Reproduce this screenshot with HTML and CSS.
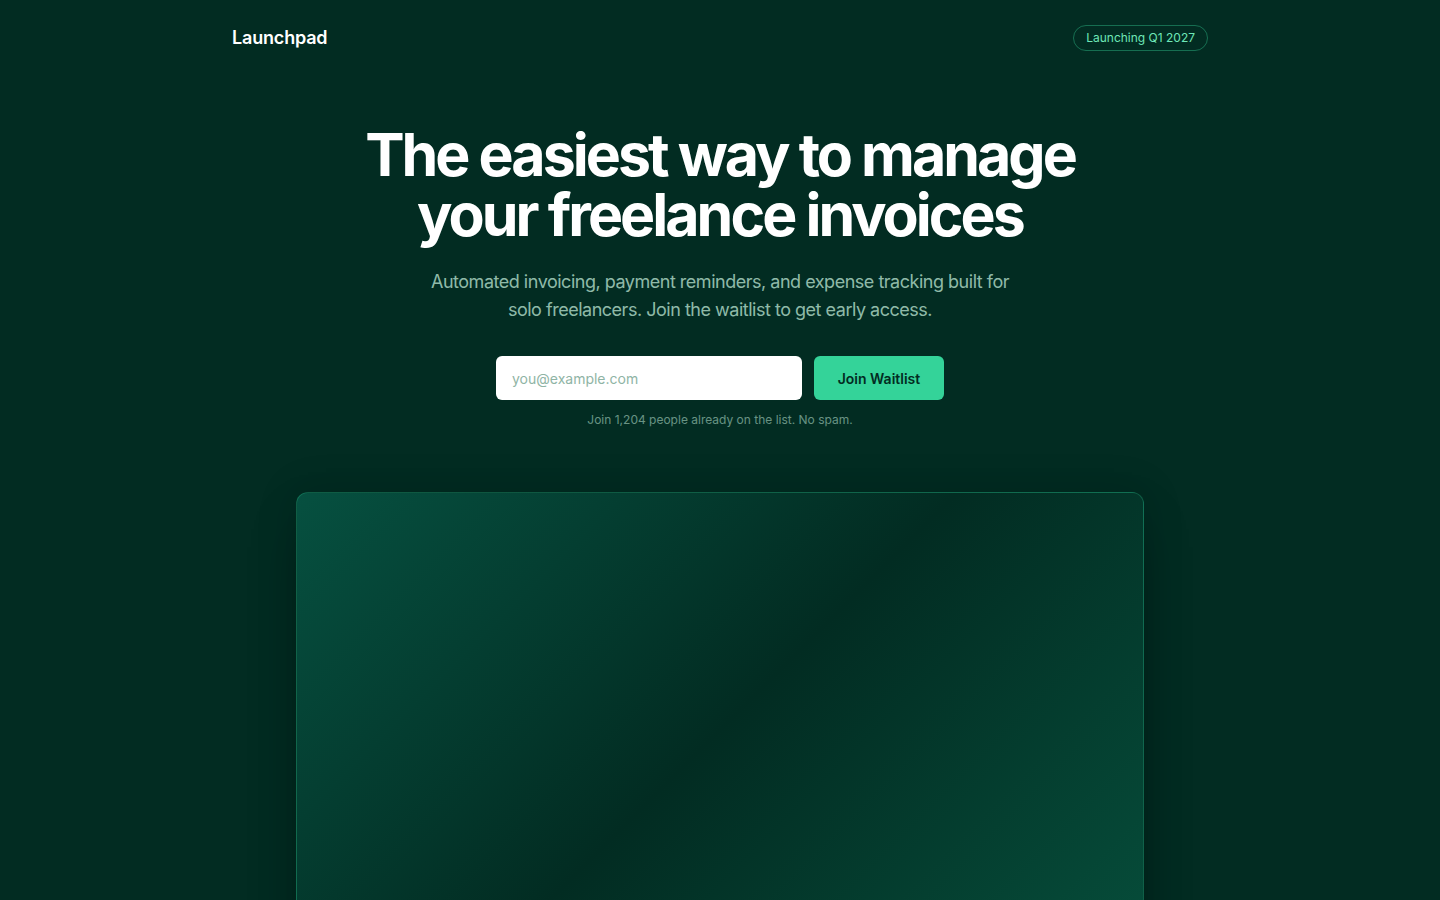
FILE: index.html
```html
<!DOCTYPE html>
<html lang="en">
<head>
<meta charset="utf-8">
<title>Launchpad</title>
<link rel="stylesheet" href="styles.css">
</head>
<body>
<div class="page">
  <header class="header">
    <div class="logo">Launchpad</div>
    <div class="badge">Launching Q1 2027</div>
  </header>
  <main class="hero">
    <h1 class="title">The easiest way to manage<br>your freelance invoices</h1>
    <p class="subtitle">Automated invoicing, payment reminders, and expense tracking built for solo freelancers. Join the waitlist to get early access.</p>
    <form class="form">
      <input class="email" type="email" placeholder="you@example.com">
      <button class="btn" type="button">Join Waitlist</button>
    </form>
    <p class="note">Join 1,204 people already on the list. No spam.</p>
    <div class="preview"></div>
  </main>
</div>
</body>
</html>
```

FILE: styles.css
```css
* { box-sizing: border-box; }
html, body { margin: 0; padding: 0; }
body {
  background: #022c22;
  color: #fff;
  font-family: Inter, "Noto Sans", sans-serif;
  -webkit-font-smoothing: antialiased;
  min-height: 100vh;
  overflow: hidden;
}
.page {
  max-width: 1024px;
  margin: 0 auto;
  padding: 0 24px;
}
.header {
  display: flex;
  align-items: center;
  justify-content: space-between;
  padding: 25px 0 24px;
}
.logo {
  font-size: 18px;
  font-weight: 600;
  line-height: 26px;
  letter-spacing: -0.01em;
  color: #fff;
}
.badge {
  font-size: 12px;
  line-height: 24px;
  padding: 0 12px;
  border: 1px solid rgba(52, 211, 153, 0.4);
  border-radius: 999px;
  color: #6ee7b7;
}
.hero {
  display: flex;
  flex-direction: column;
  align-items: center;
  text-align: center;
  padding-top: 50px;
}
.title {
  margin: 0;
  font-size: 59px;
  line-height: 60px;
  font-weight: 700;
  letter-spacing: -0.05em;
  color: #fff;
}
.subtitle {
  margin: 23px 0 0;
  max-width: 590px;
  font-size: 18px;
  line-height: 28px;
  letter-spacing: -0.027em;
  color: rgba(209, 250, 229, 0.7);
}
.form {
  display: flex;
  gap: 12px;
  width: 448px;
  margin-top: 32px;
}
.email {
  flex: 1;
  min-width: 0;
  height: 44px;
  border: none;
  border-radius: 6px;
  background: #fff;
  padding: 0 16px;
  font-family: inherit;
  font-size: 14px;
  color: #022c22;
  outline: none;
}
.email::placeholder { color: #8fb4a5; }
.btn {
  width: 130px;
  height: 44px;
  border: none;
  border-radius: 6px;
  background: #34d399;
  color: #022c22;
  font-family: inherit;
  font-size: 14px;
  font-weight: 600;
  cursor: pointer;
}
.note {
  margin: 11px 0 0;
  font-size: 12px;
  line-height: 18px;
  color: rgba(209, 250, 229, 0.5);
}
.preview {
  margin-top: 63px;
  width: 848px;
  height: 477px;
  flex-shrink: 0;
  border-radius: 12px;
  border: 1px solid rgba(52, 211, 153, 0.25);
  background: linear-gradient(135deg, #065040 0%, #022c22 50%, #064e3b 100%);
  box-shadow: 0 25px 50px -12px rgba(0, 0, 0, 0.35), 0 0 40px rgba(0,0,0,0.15);
}
```
